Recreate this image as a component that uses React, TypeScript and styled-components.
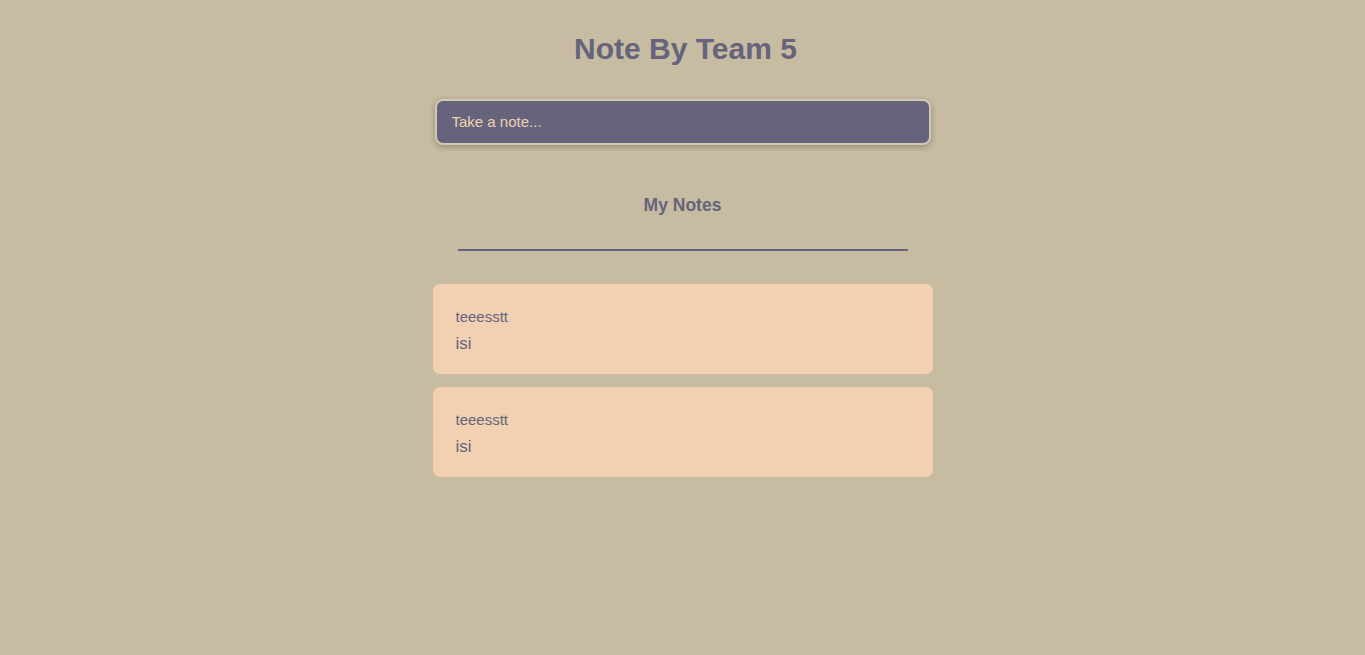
import styled, { createGlobalStyle } from 'styled-components';

const GlobalStyle = createGlobalStyle`
  html, body {
    margin: 0;
    padding: 0;
    background: #c7bba1;
    font-family: 'Liberation Sans', Arial, sans-serif;
  }
`;

const Page = styled.div`
  min-height: 655px;
  display: flex;
  flex-direction: column;
  align-items: center;
  color: #65647c;
`;

const Title = styled.h1`
  margin: 30px 0 0;
  padding-left: 6px;
  font-size: 30px;
  line-height: 37px;
  font-weight: bold;
`;

const NoteInput = styled.input`
  margin-top: 32px;
  box-sizing: border-box;
  width: 496px;
  height: 46px;
  padding: 0 15px 2px;
  border: 2px solid #d2c9b6;
  border-radius: 8px;
  background: #65647c;
  color: #f1d1b2;
  font-family: inherit;
  font-size: 15px;
  box-shadow: 0 2px 6px rgba(0, 0, 0, 0.25);
  outline: none;

  &::placeholder {
    color: #f1d1b2;
  }
`;

const SectionTitle = styled.h2`
  margin: 49px 0 0;
  font-size: 17.5px;
  line-height: 22px;
  font-weight: bold;
`;

const Divider = styled.hr`
  margin: 33px 0 0;
  width: 450px;
  height: 2px;
  border: 0;
  background: #65647c;
`;

const NoteList = styled.div`
  margin-top: 33px;
  display: flex;
  flex-direction: column;
  gap: 13px;
`;

const NoteCard = styled.div`
  box-sizing: border-box;
  width: 500px;
  height: 90px;
  padding: 24px 23px;
  border-radius: 7px;
  background: #f1d1b2;
  display: flex;
  flex-direction: column;
  gap: 8px;
`;

const NoteTitle = styled.div`
  font-size: 15px;
  line-height: 18px;
`;

const NoteBody = styled.div`
  font-size: 17px;
  line-height: 20px;
`;

const notes = [
  { title: 'teeesstt', body: 'isi' },
  { title: 'teeesstt', body: 'isi' },
];

function App() {
  return (
    <>
      <GlobalStyle />
      <Page>
        <Title>Note By Team 5</Title>
        <NoteInput placeholder="Take a note..." />
        <SectionTitle>My Notes</SectionTitle>
        <Divider />
        <NoteList>
          {notes.map((n, i) => (
            <NoteCard key={i}>
              <NoteTitle>{n.title}</NoteTitle>
              <NoteBody>{n.body}</NoteBody>
            </NoteCard>
          ))}
        </NoteList>
      </Page>
    </>
  );
}

export default App;
